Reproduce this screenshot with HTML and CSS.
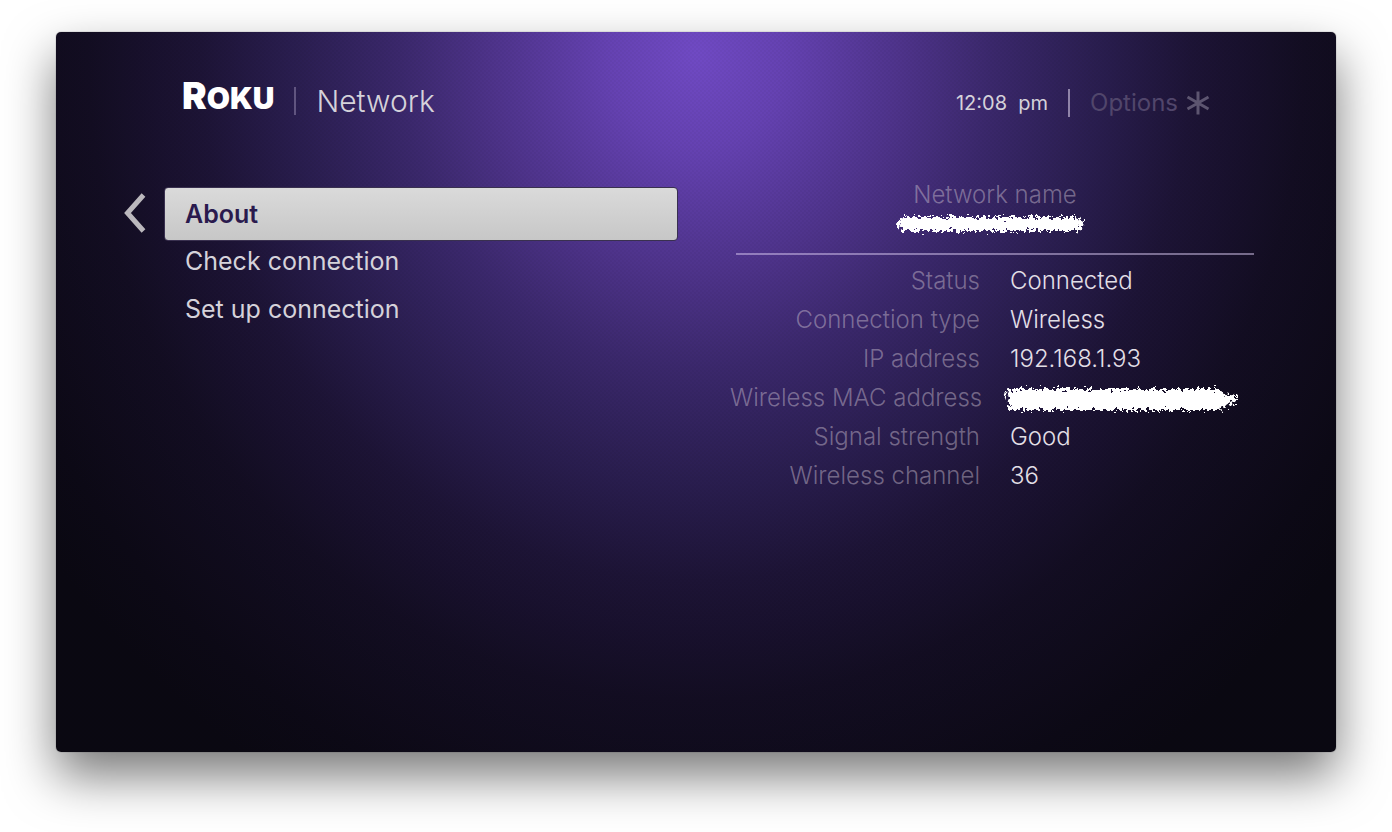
FILE: index.html
```html
<!DOCTYPE html>
<html lang="en">
<head>
<meta charset="utf-8">
<meta name="viewport" content="width=device-width, initial-scale=1">
<title>Network</title>
<link rel="stylesheet" href="styles.css">
</head>
<body>
<div class="screen">
  <header class="header">
    <div class="brand">
      <div class="logo">Roku</div>
      <span class="divider"></span>
      <h1 class="title">Network</h1>
    </div>
    <div class="tools">
      <time class="clock" datetime="12:08">12:08&nbsp; pm</time>
      <span class="divider divider-bright"></span>
      <button class="options" type="button">Options
        <svg class="star" viewBox="0 0 24 24" aria-hidden="true"><path d="M12 0.5V23.5M1.500 6L22.500 18M22.500 6L1.500 18"/></svg>
      </button>
    </div>
  </header>
  <main class="main">
    <nav class="nav">
      <button class="back" type="button" aria-label="Back">
        <svg class="chevron" viewBox="0 0 22 42" aria-hidden="true"><path d="M19.500 3L3.500 21L19.500 39"/></svg>
      </button>
      <ul class="menu">
        <li><a class="item item-selected" href="#about" aria-current="page">About</a></li>
        <li><a class="item" href="#check">Check connection</a></li>
        <li><a class="item" href="#setup">Set up connection</a></li>
      </ul>
    </nav>
    <section class="details">
      <div class="network">
        <h2 class="label">Network name</h2>
        <svg class="scribble scribble-name" viewBox="0 0 190 22" role="img" aria-label="Hidden">
          <defs><filter id="rough" x="-5%" y="-30%" width="110%" height="160%"><feTurbulence type="fractalNoise" baseFrequency="0.3" numOctaves="3" seed="4"/><feDisplacementMap in="SourceGraphic" scale="13" xChannelSelector="R" yChannelSelector="G"/></filter></defs>
          <path filter="url(#rough)" d="M-3 8L3 3H177L184 9L179 17H1Z"/>
        </svg>
      </div>
      <hr class="rule">
      <table class="facts">
        <tbody>
          <tr><th scope="row">Status</th><td>Connected</td></tr>
          <tr><th scope="row">Connection type</th><td>Wireless</td></tr>
          <tr><th scope="row">IP address</th><td>192.168.1.93</td></tr>
          <tr><th scope="row">Wireless MAC address</th><td>
            <svg class="scribble scribble-mac" viewBox="0 0 238 28" role="img" aria-label="Hidden"><path filter="url(#rough)" d="M-1 5H213L219 10L230 12V18L221 20L212 26H2Z"/></svg>
          </td></tr>
          <tr><th scope="row">Signal strength</th><td>Good</td></tr>
          <tr><th scope="row">Wireless channel</th><td>36</td></tr>
        </tbody>
      </table>
    </section>
  </main>
</div>
</body>
</html>
```
FILE: styles.css
```css
* { box-sizing: border-box; }

body {
  margin: 0;
  padding: 32px 56px 80px;
  background: #fff;
  color: #d5d2da;
  font-family: Inter, "Open Sans", sans-serif;
  font-size: 25px;
  font-weight: 400;
  line-height: 32px;
}

.screen {
  min-height: calc(100vh - 112px);
  border-radius: 5px;
  padding: 47px 76px 48px 68px;
  background:
    repeating-conic-gradient(rgba(0, 0, 0, 0.03) 0 25%, transparent 0 50%) 0 0 / 4px 4px,
    radial-gradient(ellipse 800px 850px at 50% 3%, #704ac4 0%, #6542b2 11%, #4f348c 25%, #3b286c 37%, #2a1e50 50%, #1d1436 62%, #130d22 76%, #0c0916 92%, #0a0812 100%);
  box-shadow: 0 0 1px rgba(0, 0, 0, 0.7), 0 24px 50px rgba(0, 0, 0, 0.53);
}

.header {
  display: flex;
  justify-content: space-between;
  align-items: center;
  height: 44px;
  padding: 0 50px 0 58px;
}

.brand, .tools { display: flex; align-items: center; }
.brand { gap: 20px; }
.tools { gap: 20px; padding-top: 4px; }

.logo {
  color: #fff;
  font-size: 30px;
  font-weight: 900;
  line-height: 36px;
  text-transform: uppercase;
  padding-bottom: 8px;
}
.logo::first-letter { font-size: 37px; }

.title { margin: 0; font-size: 30px; font-weight: 300; }

.divider { width: 2px; height: 28px; background: rgba(200, 190, 220, 0.35); }
.divider-bright { background: rgba(210, 200, 225, 0.6); }

.clock { font-size: 20px; }

.options {
  display: flex;
  align-items: center;
  gap: 8px;
  border: 0;
  padding: 0;
  background: none;
  color: #51466b;
  font: inherit;
  font-size: 24px;
}
.star { width: 24px; height: 24px; fill: none; stroke: #5d5570; stroke-width: 3; }

.main {
  display: flex;
  justify-content: space-between;
  align-items: flex-start;
  padding-top: 64px;
}

.nav { display: flex; align-items: flex-start; gap: 18px; flex: 0 1 554px; }
.back { border: 0; padding: 5px 0 0; background: none; }
.chevron { display: block; width: 22px; height: 42px; fill: none; stroke: #bbb8bd; stroke-width: 5; }

.menu { flex: 1; margin: 0; padding: 0; list-style: none; }
.item {
  display: block;
  padding: 8px 21px;
  color: inherit;
  text-decoration: none;
}
.item-selected {
  margin-bottom: -4px;
  border: 1px solid #39304f;
  border-radius: 4px;
  padding: 10px 20px;
  background: linear-gradient(#dadada, #c7c7c7);
  color: #2a1a4e;
  font-weight: 600;
}

.details { flex: 0 1 530px; }
.network { display: flex; flex-direction: column; align-items: center; }
.label { margin: -8px 0 0; font-size: 24px; font-weight: 300; color: rgba(200, 188, 205, 0.48); }
.scribble { display: block; fill: #fff; overflow: visible; }
.scribble-name { width: 190px; height: 22px; margin-top: 3px; }
.scribble-mac { width: 238px; height: 28px; margin-left: -3px; }

.rule { margin: 17px 6px 6px; border: 0; height: 2px; background: rgba(215, 200, 240, 0.5); }

.facts { width: 100%; table-layout: fixed; border-collapse: collapse; font-size: 24px; }
.facts tr { height: 39px; }
.facts th, .facts td { padding: 0 15px; font-weight: 300; vertical-align: middle; white-space: nowrap; }
.facts th { padding-left: 0; text-align: right; color: rgba(200, 188, 205, 0.48); }
.facts td { padding-right: 0; color: #e2dfe6; }
```
